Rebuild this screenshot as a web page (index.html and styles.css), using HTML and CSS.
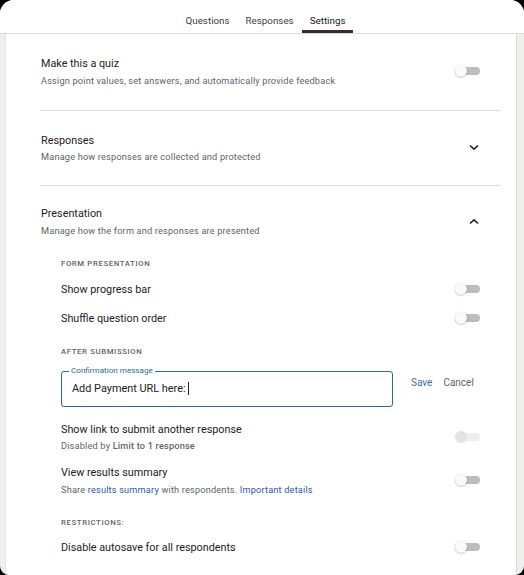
FILE: index.html
```html
<!DOCTYPE html>
<html>
<head>
<meta charset="utf-8">
<link rel="stylesheet" href="styles.css">
</head>
<body>
<div class="window">
  <header class="tabs">
    <span class="tab">Questions</span>
    <span class="tab">Responses</span>
    <span class="tab active">Settings</span>
  </header>
  <div class="page">
    <main class="card">
      <section class="section">
        <div class="text">
          <div class="title">Make this a quiz</div>
          <div class="sub">Assign point values, set answers, and automatically provide feedback</div>
        </div>
        <div class="ctrl"><span class="toggle"></span></div>
      </section>
      <section class="section">
        <div class="text">
          <div class="title">Responses</div>
          <div class="sub">Manage how responses are collected and protected</div>
        </div>
        <div class="ctrl chev">
          <svg width="10" height="7" viewBox="0 0 10 7"><path d="M1 1.5 L5 5.2 L9 1.5" fill="none" stroke="#202124" stroke-width="1.6"/></svg>
        </div>
      </section>
      <section class="section open">
        <div class="text">
          <div class="title">Presentation</div>
          <div class="sub">Manage how the form and responses are presented</div>
        </div>
        <div class="ctrl chev">
          <svg width="10" height="7" viewBox="0 0 10 7"><path d="M1 5.5 L5 1.8 L9 5.5" fill="none" stroke="#202124" stroke-width="1.6"/></svg>
        </div>
      </section>
      <div class="subsection">
        <div class="label first">FORM PRESENTATION</div>
        <div class="row first-row">
          <div class="title">Show progress bar</div>
          <div class="ctrl"><span class="toggle"></span></div>
        </div>
        <div class="row">
          <div class="title">Shuffle question order</div>
          <div class="ctrl"><span class="toggle"></span></div>
        </div>
        <div class="label after">AFTER SUBMISSION</div>
        <div class="confirm">
          <div class="field">
            <span class="legend">Confirmation message</span>
            <span class="value">Add Payment URL here:</span><span class="caret"></span>
          </div>
          <span class="btn save">Save</span>
          <span class="btn cancel">Cancel</span>
        </div>
        <div class="item link-item">
          <div class="text">
            <div class="title">Show link to submit another response</div>
            <div class="sub">Disabled by <b>Limit to 1 response</b></div>
          </div>
          <div class="ctrl"><span class="toggle disabled"></span></div>
        </div>
        <div class="item results-item">
          <div class="text">
            <div class="title">View results summary</div>
            <div class="sub">Share <a class="lnk">results summary</a> with respondents. <a class="lnk">Important details</a></div>
          </div>
          <div class="ctrl"><span class="toggle"></span></div>
        </div>
        <div class="label restr">RESTRICTIONS:</div>
        <div class="row autosave">
          <div class="title">Disable autosave for all respondents</div>
          <div class="ctrl"><span class="toggle"></span></div>
        </div>
      </div>
    </main>
  </div>
</div>
</body>
</html>
```

FILE: styles.css
```css
* { box-sizing: border-box; }
html, body { margin: 0; padding: 0; background: #000; }
body { font-family: Roboto, "Noto Sans", Arial, sans-serif; color: #202124; }

.window {
  width: 524px;
  height: 575px;
  background: #f1efed;
  border-radius: 14px 14px 9px 9px;
  overflow: hidden;
  display: flex;
  flex-direction: column;
}

.tabs {
  height: 34px;
  flex: none;
  background: #fff;
  border-bottom: 1px solid #dadce0;
  display: flex;
  justify-content: center;
  align-items: stretch;
  padding-left: 7px;
}
.tab {
  font-size: 9.8px;
  color: #3c4043;
  padding: 10px 8px 0;
  display: flex;
  align-items: center;
  border-bottom: 3px solid transparent;
}
.tab.active {
  color: #202124;
  border-bottom-color: #3b2b2b;
}

.page {
  flex: 1;
  padding: 0 7px 0 5px;
  display: flex;
}
.card {
  flex: 1;
  background: #fff;
  border-left: 1px solid #e6e4e2;
  border-right: 1px solid #dcdad8;
  padding: 0 15px 0 35px;
}

.section {
  display: flex;
  justify-content: space-between;
  align-items: center;
  padding: 21px 0 22px;
  border-bottom: 1px solid #dadce0;
}
.section + .section { padding-top: 21px; padding-bottom: 21px; }
.section.open { border-bottom: none; padding-bottom: 0; padding-top: 19px; }

.title {
  font-size: 10.8px;
  line-height: 17px;
  color: #202124;
}
.sub {
  font-size: 9.2px;
  line-height: 14px;
  margin-top: 1.5px;
  color: #5f6368;
  letter-spacing: 0.18px;
}
.sub b { font-weight: 500; color: #5f6368; }
.lnk { color: #30589f; text-decoration: none; }

.ctrl {
  width: 26px;
  margin-right: 21px;
  display: flex;
  justify-content: center;
  align-items: center;
}
.chev { justify-content: flex-end; padding-right: 1px; }

.toggle {
  position: relative;
  display: block;
  width: 25px;
  height: 12px;
}
.toggle::before {
  content: "";
  position: absolute;
  left: 5px;
  right: 0;
  top: 2px;
  height: 8px;
  border-radius: 4px;
  background: #bdbdbd;
}
.toggle::after {
  content: "";
  position: absolute;
  left: 0;
  top: 0;
  width: 12px;
  height: 12px;
  border-radius: 50%;
  background: #fafafa;
  box-shadow: 0 0.5px 1.5px rgba(0,0,0,0.35);
}
.toggle.disabled::before { background: #eeeeee; }
.toggle.disabled::after { background: #e3e3e3; box-shadow: none; }

.subsection { padding-left: 20px; }

.label {
  font-size: 7.8px;
  line-height: 12px;
  letter-spacing: 0.6px;
  color: #5f6368;
  font-weight: 500;
}
.label.first { margin-top: 20px; }
.label.after { margin-top: 13px; }
.label.restr { margin-top: 20px; }

.row {
  display: flex;
  justify-content: space-between;
  align-items: center;
  height: 29px;
}
.row.first-row { margin-top: 5px; }
.row.autosave { margin-top: 4px; }

.confirm {
  display: flex;
  align-items: flex-start;
  margin-top: 13px;
  height: 36px;
}
.field {
  position: relative;
  width: 332px;
  height: 36px;
  border: 1px solid #2a6d8c;
  border-radius: 3px;
  display: flex;
  align-items: center;
  padding-left: 10px;
}
.legend {
  position: absolute;
  left: 7px;
  top: -7px;
  padding: 0 2px;
  background: #fff;
  font-size: 8.1px;
  line-height: 11px;
  color: #2a6d8c;
}
.value { font-size: 10.9px; color: #202124; }
.caret {
  display: inline-block;
  width: 1px;
  height: 13px;
  background: #202124;
  margin-left: 2px;
}
.btn { font-size: 10px; line-height: 14px; margin-top: 5px; }
.save { color: #3d6bc0; margin-left: 18px; }
.cancel { color: #5f6368; margin-left: 11px; }

.item {
  display: flex;
  justify-content: space-between;
  align-items: center;
}
.link-item { margin-top: 14px; }
.results-item { margin-top: 11px; }
```
